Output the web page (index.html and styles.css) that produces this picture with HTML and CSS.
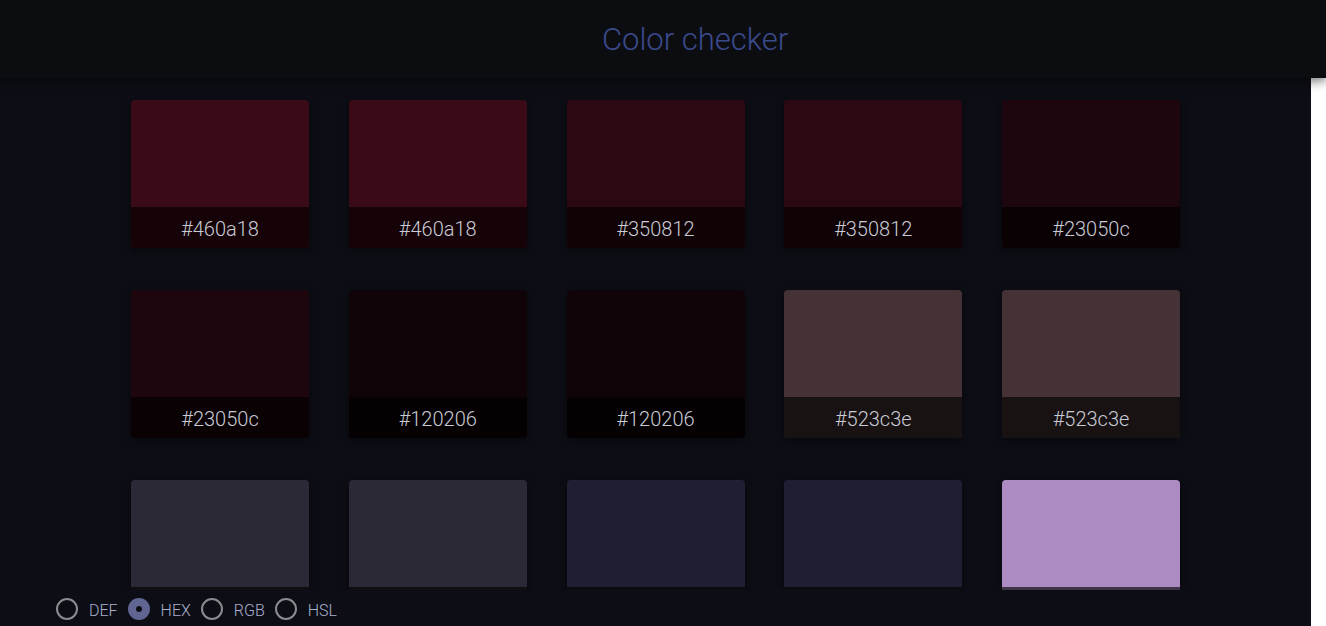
FILE: index.html
```html
<!DOCTYPE html>
<html lang="en">
<head>
<meta charset="utf-8">
<title>Color checker</title>
<link rel="stylesheet" href="styles.css">
</head>
<body>
<header class="topbar">
  <h1 class="title">Color checker</h1>
</header>
<main class="page">
  <div class="grid">
    <div class="card" style="--c:#460a18"><div class="swatch"></div><div class="label">#460a18</div></div>
    <div class="card" style="--c:#460a18"><div class="swatch"></div><div class="label">#460a18</div></div>
    <div class="card" style="--c:#350812"><div class="swatch"></div><div class="label">#350812</div></div>
    <div class="card" style="--c:#350812"><div class="swatch"></div><div class="label">#350812</div></div>
    <div class="card" style="--c:#23050c"><div class="swatch"></div><div class="label">#23050c</div></div>
    <div class="card" style="--c:#23050c"><div class="swatch"></div><div class="label">#23050c</div></div>
    <div class="card" style="--c:#120206"><div class="swatch"></div><div class="label">#120206</div></div>
    <div class="card" style="--c:#120206"><div class="swatch"></div><div class="label">#120206</div></div>
    <div class="card" style="--c:#523c3e"><div class="swatch"></div><div class="label">#523c3e</div></div>
    <div class="card" style="--c:#523c3e"><div class="swatch"></div><div class="label">#523c3e</div></div>
    <div class="card" style="--c:#32313d"><div class="swatch"></div><div class="label">#32313d</div></div>
    <div class="card" style="--c:#32313d"><div class="swatch"></div><div class="label">#32313d</div></div>
    <div class="card" style="--c:#23243a"><div class="swatch"></div><div class="label">#23243a</div></div>
    <div class="card" style="--c:#23243a"><div class="swatch"></div><div class="label">#23243a</div></div>
    <div class="card" style="--c:#d4aaee"><div class="swatch"></div><div class="label">#d4aaee</div></div>
  </div>
</main>
<footer class="modes">
  <label class="mode"><input type="radio" name="mode" value="def"><span class="dot"></span><span class="mode-text">DEF</span></label>
  <label class="mode"><input type="radio" name="mode" value="hex" checked><span class="dot"></span><span class="mode-text">HEX</span></label>
  <label class="mode"><input type="radio" name="mode" value="rgb"><span class="dot"></span><span class="mode-text">RGB</span></label>
  <label class="mode"><input type="radio" name="mode" value="hsl"><span class="dot"></span><span class="mode-text">HSL</span></label>
</footer>
</body>
</html>
```
FILE: styles.css
```css
html {
  background: #ffffff;
}
body {
  margin: 0;
  overflow: hidden;
  font-family: Roboto, "Liberation Sans", sans-serif;
}
.topbar {
  position: relative;
  z-index: 2;
  height: 78px;
  background: #0c0d11;
  display: flex;
  align-items: center;
  justify-content: center;
  padding-left: 64px;
  box-sizing: border-box;
  box-shadow: 0 3px 10px rgba(0, 0, 0, 0.55);
}
.title {
  margin: 0;
  font-weight: 300;
  font-size: 31px;
  color: #3b4a8c;
}
.page {
  width: 1311px;
  min-height: 560px;
  background: #0d0e15;
  padding-top: 22px;
  box-sizing: border-box;
}
.grid {
  display: grid;
  grid-template-columns: repeat(5, 178px);
  column-gap: 39.75px;
  row-gap: 42px;
  justify-content: center;
}
.card {
  height: 148px;
  border-radius: 4px;
  overflow: hidden;
  display: flex;
  flex-direction: column;
  box-shadow: 0 2px 6px rgba(0, 0, 0, 0.5);
}
.swatch {
  height: 107px;
  background: var(--c);
  opacity: 0.8;
}
.label {
  flex: 1;
  display: flex;
  align-items: center;
  justify-content: center;
  padding-top: 2px;
  background: linear-gradient(rgba(0, 0, 0, 0.7), rgba(0, 0, 0, 0.7)), var(--c);
  color: #c9ccd6;
  font-weight: 300;
  font-size: 20px;
}
.modes {
  position: fixed;
  left: 0;
  bottom: 0;
  width: 1311px;
  height: 36px;
  background: #0d0e15;
  display: flex;
  align-items: center;
  padding-left: 56px;
  padding-top: 2px;
  box-sizing: border-box;
  z-index: 3;
}
.mode {
  display: flex;
  align-items: center;
  cursor: pointer;
}
.mode input {
  display: none;
}
.dot {
  flex: none;
  width: 22px;
  height: 22px;
  border: 2px solid #8b8b90;
  border-radius: 50%;
  position: relative;
  box-sizing: border-box;
}
.mode input:checked + .dot {
  background: #606592;
  border-color: #606592;
}
.mode input:checked + .dot::after {
  content: "";
  position: absolute;
  left: 6px;
  top: 6px;
  width: 6px;
  height: 6px;
  border-radius: 50%;
  background: #0d0e15;
}
.mode-text {
  margin-left: 11px;
  margin-right: 10px;
  font-size: 16px;
  font-weight: 300;
  color: #aab0cf;
  margin-top: 2px;
}
```
